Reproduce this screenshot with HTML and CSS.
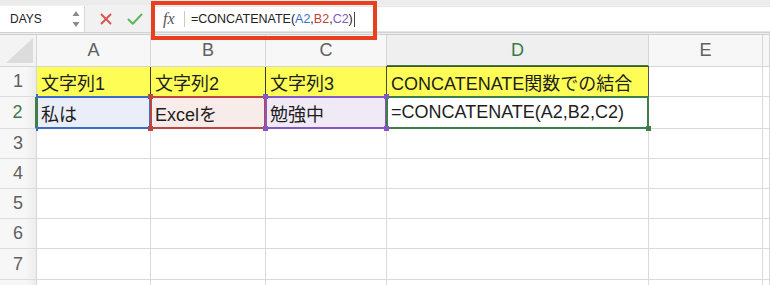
FILE: index.html
```html
<!DOCTYPE html>
<html lang="ja">
<head>
<meta charset="utf-8">
<link rel="stylesheet" href="styles.css">
</head>
<body>
<div class="app">
  <div class="toolbar">
    <div class="namebox">
      <span class="name">DAYS</span>
      <span class="spin">
        <svg width="8" height="18" viewBox="0 0 8 18"><path d="M4 1 L7.5 6 L0.5 6 Z" fill="#8a8a8a"/><path d="M4 17 L7.5 12 L0.5 12 Z" fill="#8a8a8a"/></svg>
      </span>
    </div>
    <div class="actions">
      <svg class="ico" width="14" height="14" viewBox="0 0 14 14"><path d="M2.5 2.5 L11.5 11.5 M11.5 2.5 L2.5 11.5" stroke="#d9534f" stroke-width="1.9" stroke-linecap="round"/></svg>
      <svg class="ico" width="16" height="14" viewBox="0 0 16 14"><path d="M1.5 7.5 L5.8 11.8 L14.5 2.5" stroke="#5cb85c" stroke-width="2" fill="none" stroke-linecap="round" stroke-linejoin="round"/></svg>
    </div>
    <div class="formula">
      <span class="fx">fx</span>
      <span class="sep"></span>
      <span class="ftext">=CONCATENATE(<span class="r-a">A2</span>,<span class="r-b">B2</span>,<span class="r-c">C2</span>)</span><span class="caret"></span>
    </div>
    <div class="highlight"></div>
  </div>
  <div class="sheet">
    <div class="corner"><span class="tri"></span></div>
    <div class="ch">A</div>
    <div class="ch">B</div>
    <div class="ch">C</div>
    <div class="ch active">D</div>
    <div class="ch">E</div>
    <div class="ch"></div>

    <div class="rh">1</div>
    <div class="c y">文字列1</div>
    <div class="c y">文字列2</div>
    <div class="c y">文字列3</div>
    <div class="c y yd">CONCATENATE関数での結合</div>
    <div class="c"></div>
    <div class="c"></div>

    <div class="rh active">2</div>
    <div class="c sel sa">私は<i class="h tl"></i><i class="h tr"></i><i class="h bl"></i><i class="h br"></i></div>
    <div class="c sel sb">Excelを<i class="h tl"></i><i class="h tr"></i><i class="h bl"></i><i class="h br"></i></div>
    <div class="c sel sc">勉強中<i class="h tl"></i><i class="h tr"></i><i class="h bl"></i><i class="h br"></i></div>
    <div class="c sel sd">=CONCATENATE(A2,B2,C2)<i class="h br"></i></div>
    <div class="c"></div>
    <div class="c"></div>

    <div class="rh">3</div><div class="c"></div><div class="c"></div><div class="c"></div><div class="c"></div><div class="c"></div><div class="c"></div>
    <div class="rh">4</div><div class="c"></div><div class="c"></div><div class="c"></div><div class="c"></div><div class="c"></div><div class="c"></div>
    <div class="rh">5</div><div class="c"></div><div class="c"></div><div class="c"></div><div class="c"></div><div class="c"></div><div class="c"></div>
    <div class="rh">6</div><div class="c"></div><div class="c"></div><div class="c"></div><div class="c"></div><div class="c"></div><div class="c"></div>
    <div class="rh">7</div><div class="c"></div><div class="c"></div><div class="c"></div><div class="c"></div><div class="c"></div><div class="c"></div>
    <div class="rh"></div><div class="c"></div><div class="c"></div><div class="c"></div><div class="c"></div><div class="c"></div><div class="c"></div>
  </div>
</div>
</body>
</html>
```

FILE: styles.css
```css
html, body {
  margin: 0;
  padding: 0;
  background: #ffffff;
  overflow: hidden;
}
body {
  font-family: "Liberation Sans", "Noto Sans CJK JP", sans-serif;
  width: 770px;
  height: 285px;
}
.app {
  position: relative;
  width: 770px;
  height: 285px;
  overflow: hidden;
}
.toolbar {
  position: relative;
  height: 35px;
  box-sizing: border-box;
  background: #f1f1f1;
  border-top: 5px solid #ececec;
  display: flex;
  align-items: flex-start;
  padding-top: 1px;
}
.toolbar::after {
  content: "";
  position: absolute;
  left: 0;
  right: 0;
  bottom: 0;
  height: 3px;
  border-top: 1px solid #d2d2d2;
  border-bottom: 1px solid #cfcfcf;
  box-sizing: border-box;
  background: #ececec;
}
.namebox {
  width: 85px;
  height: 26px;
  box-sizing: border-box;
  background: #ffffff;
  border-right: 1px solid #d8d8d8;
  display: flex;
  align-items: center;
  justify-content: space-between;
  padding: 0 4px 0 10px;
}
.name {
  font-family: "Liberation Sans", "Noto Sans", sans-serif;
  font-size: 12px;
  color: #222;
}
.spin {
  display: flex;
  align-items: center;
}
.actions {
  width: 66px;
  height: 26px;
  display: flex;
  align-items: center;
  justify-content: space-between;
  padding: 0 8px 0 14px;
  box-sizing: border-box;
}
.formula {
  flex: 1;
  height: 26px;
  background: #ffffff;
  display: flex;
  align-items: center;
  padding-left: 12px;
  box-sizing: border-box;
  border-top: 1px solid #e4e4e4;
  border-bottom: 1px solid #e4e4e4;
}
.fx {
  font-family: "Liberation Serif", serif;
  font-style: italic;
  font-size: 16px;
  color: #555;
  width: 17px;
}
.sep {
  width: 1px;
  height: 16px;
  background: #c9c9c9;
  margin: 0 6px 0 4px;
}
.ftext {
  font-family: "Liberation Sans", "Noto Sans", sans-serif;
  font-size: 12.5px;
  color: #222;
}
.r-a { color: #3b6cc7; }
.r-b { color: #c0413b; }
.r-c { color: #8557c3; }
.caret {
  width: 1px;
  height: 15px;
  background: #444;
  margin-left: 1px;
}
.highlight {
  position: absolute;
  left: 151px;
  top: -4px;
  width: 226px;
  height: 39px;
  box-sizing: border-box;
  border: 4px solid #e8401f;
  z-index: 5;
}

.sheet {
  display: grid;
  grid-template-columns: 37px 114px 115px 121px 262px 114px 1fr;
  grid-template-rows: 32px 30px 32px 30px 30px 30px 30px 31px 30px;
}
.corner {
  background: #f3f3f3;
  border-right: 1px solid #d6d6d6;
  border-bottom: 1px solid #d6d6d6;
  position: relative;
}
.tri {
  position: absolute;
  right: 3px;
  bottom: 3px;
  width: 0;
  height: 0;
  border-left: 27px solid transparent;
  border-bottom: 25px solid #dcdcdc;
}
.ch {
  background: #f7f7f7;
  border-right: 1px solid #d6d6d6;
  border-bottom: 1px solid #d6d6d6;
  display: flex;
  align-items: center;
  justify-content: center;
  font-family: "Liberation Sans", "Noto Sans", sans-serif;
  font-size: 18px;
  color: #606060;
}
.ch.active {
  background: #efefef;
  color: #3a7a48;
  border-bottom: 2px solid #3f7d4a;
}
.rh {
  background: linear-gradient(to right, #f7f7f7 70%, #ededed);
  border-right: 1px solid #d6d6d6;
  border-bottom: 1px solid #dcdcdc;
  display: flex;
  align-items: center;
  justify-content: center;
  font-family: "Liberation Sans", "Noto Sans", sans-serif;
  font-size: 18px;
  color: #606060;
}
.rh.active {
  color: #3a7a48;
  border-right: 2px solid #3f7d4a;
}
.c {
  position: relative;
  border-right: 1px solid #dadada;
  border-bottom: 1px solid #dadada;
  display: flex;
  align-items: center;
  padding-left: 4px;
  font-family: "Liberation Sans", "Noto Sans CJK JP", sans-serif;
  font-size: 18px;
  color: #1e1e1e;
  white-space: nowrap;
  overflow: visible;
}
.c.y {
  background: #fdfd55;
  border-right: 1px solid #3a3a2a;
  border-bottom: 1px solid #b8b86a;
}
.c.yd {
  border-top: 1px solid #4a4a3a;
  border-left: 1px solid #4a4a3a;
  margin-left: -1px;
  margin-top: -1px;
  border-right: 1px solid #555;
}
.sel::after {
  content: "";
  position: absolute;
  left: -1px;
  top: -1px;
  right: -1px;
  bottom: -1px;
  border: 2px solid var(--sc);
  pointer-events: none;
}
.sa { --sc: #3b6cc7; background: #e9eef8; }
.sb { --sc: #bf4540; background: #f8ecea; }
.sc { --sc: #8557c3; background: #efeaf6; }
.sd { --sc: #3f7d4a; background: #ffffff; padding-left: 4px; }
.sa::after { border-left-color: #3f7d4a; }
.h {
  position: absolute;
  width: 5px;
  height: 5px;
  background: var(--sc);
  z-index: 2;
}
.h.tl { left: -3px; top: -3px; }
.h.tr { right: -3px; top: -3px; }
.h.bl { left: -3px; bottom: -3px; }
.h.br { right: -3px; bottom: -3px; }
.sa .h.tl, .sa .h.bl { width: 2px; left: -1px; }
```
